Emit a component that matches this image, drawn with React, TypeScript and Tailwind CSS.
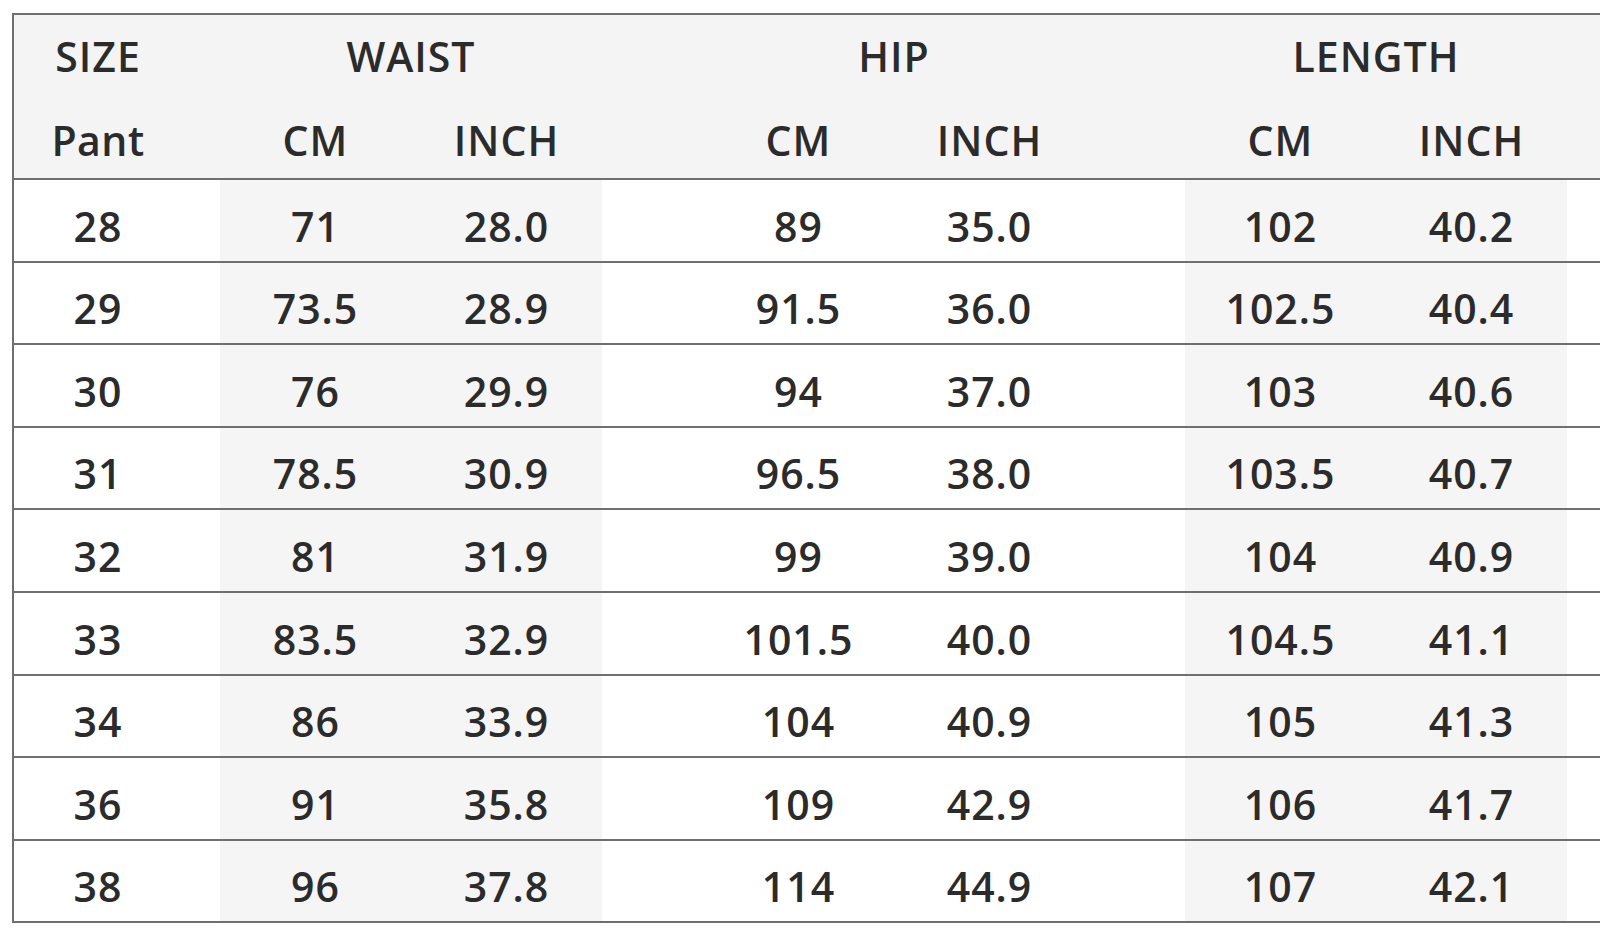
import React from "react";

const rows: [string, string, string, string, string, string, string][] = [
    ["28", "71", "28.0", "89", "35.0", "102", "40.2"],
    ["29", "73.5", "28.9", "91.5", "36.0", "102.5", "40.4"],
    ["30", "76", "29.9", "94", "37.0", "103", "40.6"],
    ["31", "78.5", "30.9", "96.5", "38.0", "103.5", "40.7"],
    ["32", "81", "31.9", "99", "39.0", "104", "40.9"],
    ["33", "83.5", "32.9", "101.5", "40.0", "104.5", "41.1"],
    ["34", "86", "33.9", "104", "40.9", "105", "41.3"],
    ["36", "91", "35.8", "109", "42.9", "106", "41.7"],
    ["38", "96", "37.8", "114", "44.9", "107", "42.1"],
];

// size | waist cm | waist in | gap | hip cm | hip in | gap | length cm | length in | rest
const cols = "grid grid-cols-[206px_191px_191px_101px_191px_191px_100px_191px_191px_1fr]";

function Cell({ children, shaded, first }: { children?: React.ReactNode; shaded?: boolean; first?: boolean }) {
    return (
        <div
            className={`flex items-center justify-center pt-[12px] ${shaded ? "bg-[#f5f5f5]" : ""} ${first ? "pr-[38px]" : ""}`}
        >
            {children}
        </div>
    );
}

export default function App() {
    return (
        <div className="min-h-[937px] w-full bg-white pt-[13px] pl-[12px] text-[#2b2b2b] [font-family:'Open_Sans',sans-serif]">
            <div className="border-l-2 border-t-2 border-[#6f6f6f]">
                <div className={`${cols} grid-rows-[81.5px_81.5px] bg-[#f4f4f4] border-b-2 border-[#6f6f6f] text-[41px] font-semibold tracking-[1px]`}>
                    <div className="flex items-center justify-center pr-[38px] pt-[2px]">SIZE</div>
                    <div className="col-span-2 flex items-center justify-center pt-[2px]">WAIST</div>
                    <div />
                    <div className="col-span-2 flex items-center justify-center pt-[2px]">HIP</div>
                    <div />
                    <div className="col-span-2 flex items-center justify-center pt-[2px]">LENGTH</div>
                    <div />
                    <div className="flex items-center justify-center pr-[38px] pt-[6px] tracking-[0.5px]">Pant</div>
                    <div className="flex items-center justify-center pt-[6px]">CM</div>
                    <div className="flex items-center justify-center pt-[6px]">INCH</div>
                    <div />
                    <div className="flex items-center justify-center pt-[6px]">CM</div>
                    <div className="flex items-center justify-center pt-[6px]">INCH</div>
                    <div />
                    <div className="flex items-center justify-center pt-[6px]">CM</div>
                    <div className="flex items-center justify-center pt-[6px]">INCH</div>
                    <div />
                </div>
                {rows.map((r) => (
                    <div key={r[0]} className={`${cols} h-[82.6px] border-b-2 border-[#6f6f6f] text-[41px] font-semibold tracking-[1px]`}>
                        <Cell first>{r[0]}</Cell>
                        <Cell shaded>{r[1]}</Cell>
                        <Cell shaded>{r[2]}</Cell>
                        <Cell />
                        <Cell>{r[3]}</Cell>
                        <Cell>{r[4]}</Cell>
                        <Cell />
                        <Cell shaded>{r[5]}</Cell>
                        <Cell shaded>{r[6]}</Cell>
                        <Cell />
                    </div>
                ))}
            </div>
        </div>
    );
}
